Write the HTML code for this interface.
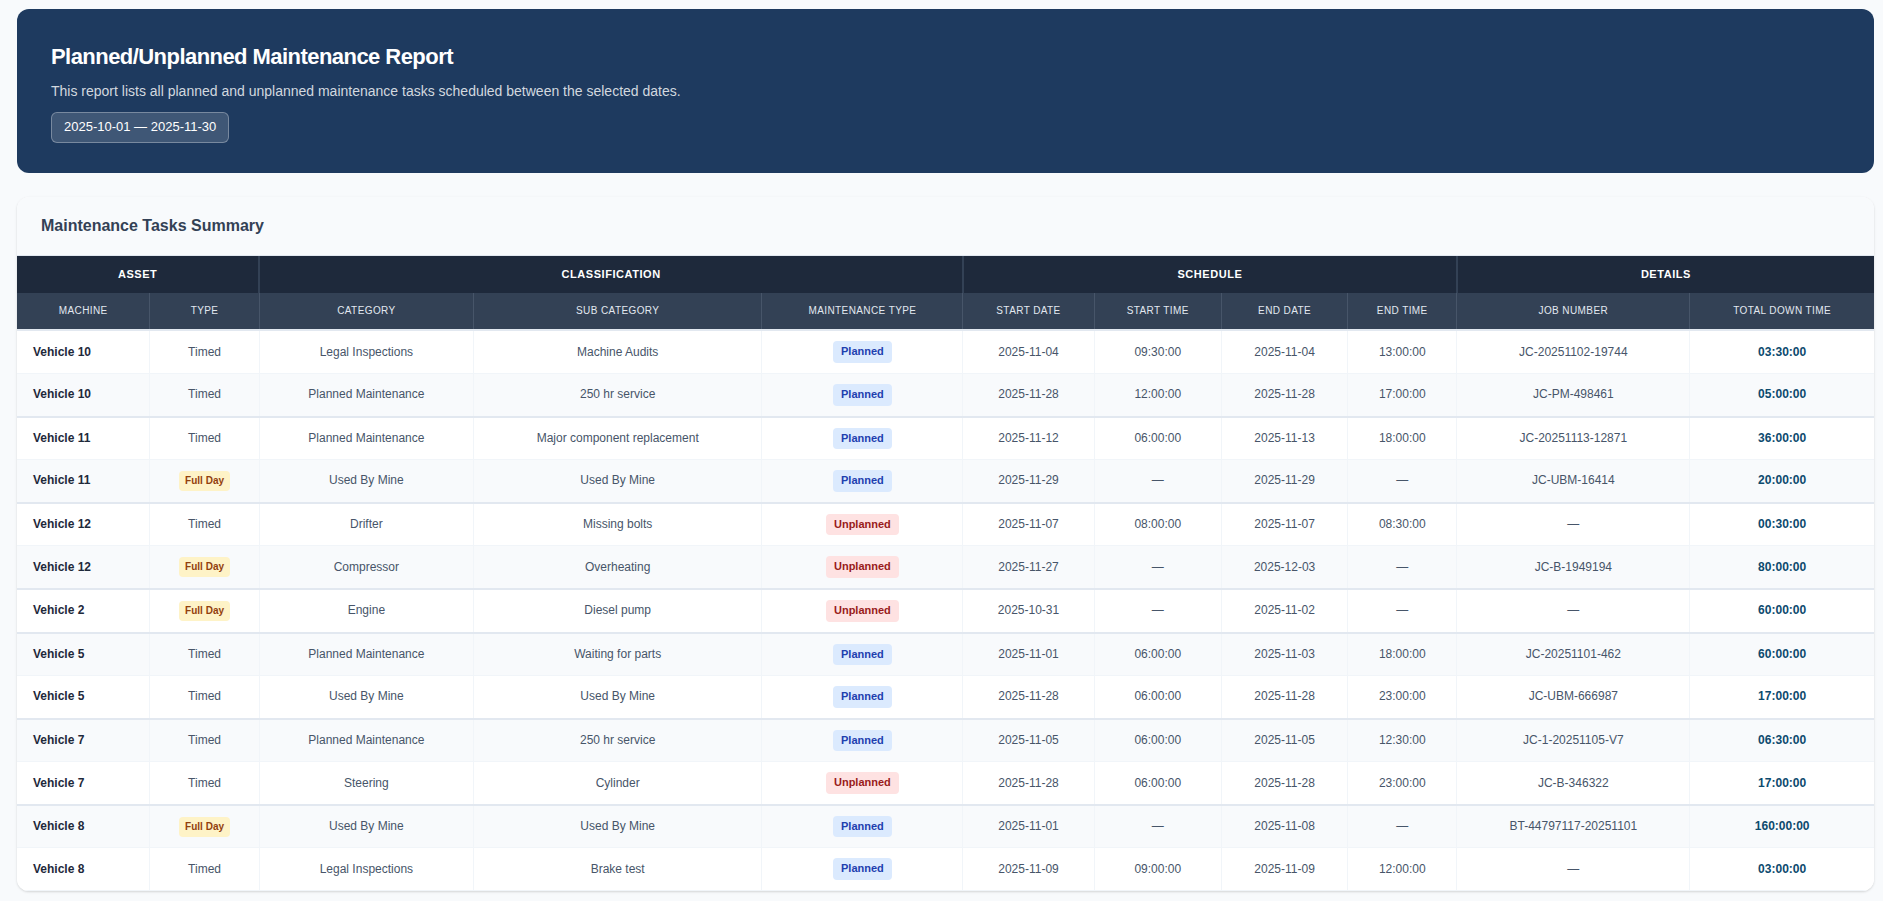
<!DOCTYPE html>
<html lang="en">
<head>
<meta charset="utf-8">
<title>Planned/Unplanned Maintenance Report</title>
<style>
*{box-sizing:border-box;margin:0;padding:0}
html,body{width:1883px;height:901px;overflow:hidden}
body{background:#f8fafc;font-family:"Liberation Sans",sans-serif;font-size:16px;line-height:1.6;color:#475569;padding:8.8px 9px 0 17px}
.hero{background:#1e3a5f;border-radius:12px;padding:30px 34px;margin-bottom:24px;color:#fff}
.hero h1{font-size:22px;font-weight:700;letter-spacing:-0.55px;margin-bottom:6px;white-space:nowrap;color:#fff}
.hero p{font-size:14px;margin-bottom:10px;white-space:nowrap;color:#d2d8df}
.hero .range{display:inline-block;padding:4px 12px;border:1px solid rgba(255,255,255,.3);background:rgba(255,255,255,.15);border-radius:6px;font-size:13px;white-space:nowrap;color:#fff}
.card{background:#fff;border-radius:12px;overflow:hidden;box-shadow:0 1px 3px rgba(0,0,0,.1),0 1px 2px rgba(0,0,0,.06)}
.card-head{padding:16px 24px;background:#f8fafc;border-bottom:1px solid #e2e8f0}
.card-head h2{font-size:16px;font-weight:700;color:#334155;white-space:nowrap}
table{border-collapse:collapse;width:100%;font-size:12px}
th,td{text-align:center;white-space:nowrap}
tr.grp th{padding:10px 8px;background:#1e293b;color:#fff;font-size:11px;font-weight:700;letter-spacing:.05em;border-right:2px solid #334155}
tr.sub th{padding:10px 8px;background:#334155;color:#e2e8f0;font-size:10px;font-weight:400;letter-spacing:.4px;border-right:1px solid #475569}
td{padding:10px 8px;border-bottom:1px solid #f1f5f9;border-right:1px solid #f1f5f9;background:#fff}
tr.grp th:last-child,tr.sub th:last-child,td:last-child{border-right:0}
tr.alt td{background:#f8fafc}
tr.gs td{border-top:2px solid #e2e8f0}
td.m{text-align:left;padding-left:16px;font-weight:700;color:#1e293b}
td.t{font-weight:700;color:#0c4a6e}
.bd{display:inline-block;font-weight:700;border-radius:4px}
.bd.pl,.bd.un{font-size:11px;padding:2px 8px}
.bd.pl{background:#dbeafe;color:#1e40af}
.bd.un{background:#fee2e2;color:#991b1b}
.bd.full{font-size:10px;padding:2px 6px;background:#fef3c7;color:#92400e}
</style>
</head>
<body>
<div class="hero">
  <h1>Planned/Unplanned Maintenance Report</h1>
  <p>This report lists all planned and unplanned maintenance tasks scheduled between the selected dates.</p>
  <span class="range">2025-10-01 — 2025-11-30</span>
</div>
<div class="card">
  <div class="card-head"><h2>Maintenance Tasks Summary</h2></div>
  <div class="tw">
  <table>
    <thead>
      <tr class="grp">
        <th colspan="2">ASSET</th>
        <th colspan="3">CLASSIFICATION</th>
        <th colspan="4">SCHEDULE</th>
        <th colspan="2">DETAILS</th>
      </tr>
      <tr class="sub">
        <th>MACHINE</th><th>TYPE</th><th>CATEGORY</th><th>SUB CATEGORY</th><th>MAINTENANCE TYPE</th><th>START DATE</th><th>START TIME</th><th>END DATE</th><th>END TIME</th><th>JOB NUMBER</th><th>TOTAL DOWN TIME</th>
      </tr>
    </thead>
    <tbody>
      <tr class="gs"><td class="m">Vehicle 10</td><td>Timed</td><td>Legal Inspections</td><td>Machine Audits</td><td><span class="bd pl">Planned</span></td><td>2025-11-04</td><td>09:30:00</td><td>2025-11-04</td><td>13:00:00</td><td>JC-20251102-19744</td><td class="t">03:30:00</td></tr>
      <tr class="alt"><td class="m">Vehicle 10</td><td>Timed</td><td>Planned Maintenance</td><td>250 hr service</td><td><span class="bd pl">Planned</span></td><td>2025-11-28</td><td>12:00:00</td><td>2025-11-28</td><td>17:00:00</td><td>JC-PM-498461</td><td class="t">05:00:00</td></tr>
      <tr class="gs"><td class="m">Vehicle 11</td><td>Timed</td><td>Planned Maintenance</td><td>Major component replacement</td><td><span class="bd pl">Planned</span></td><td>2025-11-12</td><td>06:00:00</td><td>2025-11-13</td><td>18:00:00</td><td>JC-20251113-12871</td><td class="t">36:00:00</td></tr>
      <tr class="alt"><td class="m">Vehicle 11</td><td><span class="bd full">Full Day</span></td><td>Used By Mine</td><td>Used By Mine</td><td><span class="bd pl">Planned</span></td><td>2025-11-29</td><td>—</td><td>2025-11-29</td><td>—</td><td>JC-UBM-16414</td><td class="t">20:00:00</td></tr>
      <tr class="gs"><td class="m">Vehicle 12</td><td>Timed</td><td>Drifter</td><td>Missing bolts</td><td><span class="bd un">Unplanned</span></td><td>2025-11-07</td><td>08:00:00</td><td>2025-11-07</td><td>08:30:00</td><td>—</td><td class="t">00:30:00</td></tr>
      <tr class="alt"><td class="m">Vehicle 12</td><td><span class="bd full">Full Day</span></td><td>Compressor</td><td>Overheating</td><td><span class="bd un">Unplanned</span></td><td>2025-11-27</td><td>—</td><td>2025-12-03</td><td>—</td><td>JC-B-1949194</td><td class="t">80:00:00</td></tr>
      <tr class="gs"><td class="m">Vehicle 2</td><td><span class="bd full">Full Day</span></td><td>Engine</td><td>Diesel pump</td><td><span class="bd un">Unplanned</span></td><td>2025-10-31</td><td>—</td><td>2025-11-02</td><td>—</td><td>—</td><td class="t">60:00:00</td></tr>
      <tr class="alt gs"><td class="m">Vehicle 5</td><td>Timed</td><td>Planned Maintenance</td><td>Waiting for parts</td><td><span class="bd pl">Planned</span></td><td>2025-11-01</td><td>06:00:00</td><td>2025-11-03</td><td>18:00:00</td><td>JC-20251101-462</td><td class="t">60:00:00</td></tr>
      <tr><td class="m">Vehicle 5</td><td>Timed</td><td>Used By Mine</td><td>Used By Mine</td><td><span class="bd pl">Planned</span></td><td>2025-11-28</td><td>06:00:00</td><td>2025-11-28</td><td>23:00:00</td><td>JC-UBM-666987</td><td class="t">17:00:00</td></tr>
      <tr class="alt gs"><td class="m">Vehicle 7</td><td>Timed</td><td>Planned Maintenance</td><td>250 hr service</td><td><span class="bd pl">Planned</span></td><td>2025-11-05</td><td>06:00:00</td><td>2025-11-05</td><td>12:30:00</td><td>JC-1-20251105-V7</td><td class="t">06:30:00</td></tr>
      <tr><td class="m">Vehicle 7</td><td>Timed</td><td>Steering</td><td>Cylinder</td><td><span class="bd un">Unplanned</span></td><td>2025-11-28</td><td>06:00:00</td><td>2025-11-28</td><td>23:00:00</td><td>JC-B-346322</td><td class="t">17:00:00</td></tr>
      <tr class="alt gs"><td class="m">Vehicle 8</td><td><span class="bd full">Full Day</span></td><td>Used By Mine</td><td>Used By Mine</td><td><span class="bd pl">Planned</span></td><td>2025-11-01</td><td>—</td><td>2025-11-08</td><td>—</td><td>BT-44797117-20251101</td><td class="t">160:00:00</td></tr>
      <tr><td class="m">Vehicle 8</td><td>Timed</td><td>Legal Inspections</td><td>Brake test</td><td><span class="bd pl">Planned</span></td><td>2025-11-09</td><td>09:00:00</td><td>2025-11-09</td><td>12:00:00</td><td>—</td><td class="t">03:00:00</td></tr>
    </tbody>
  </table>
  </div>
</div>
</body>
</html>
